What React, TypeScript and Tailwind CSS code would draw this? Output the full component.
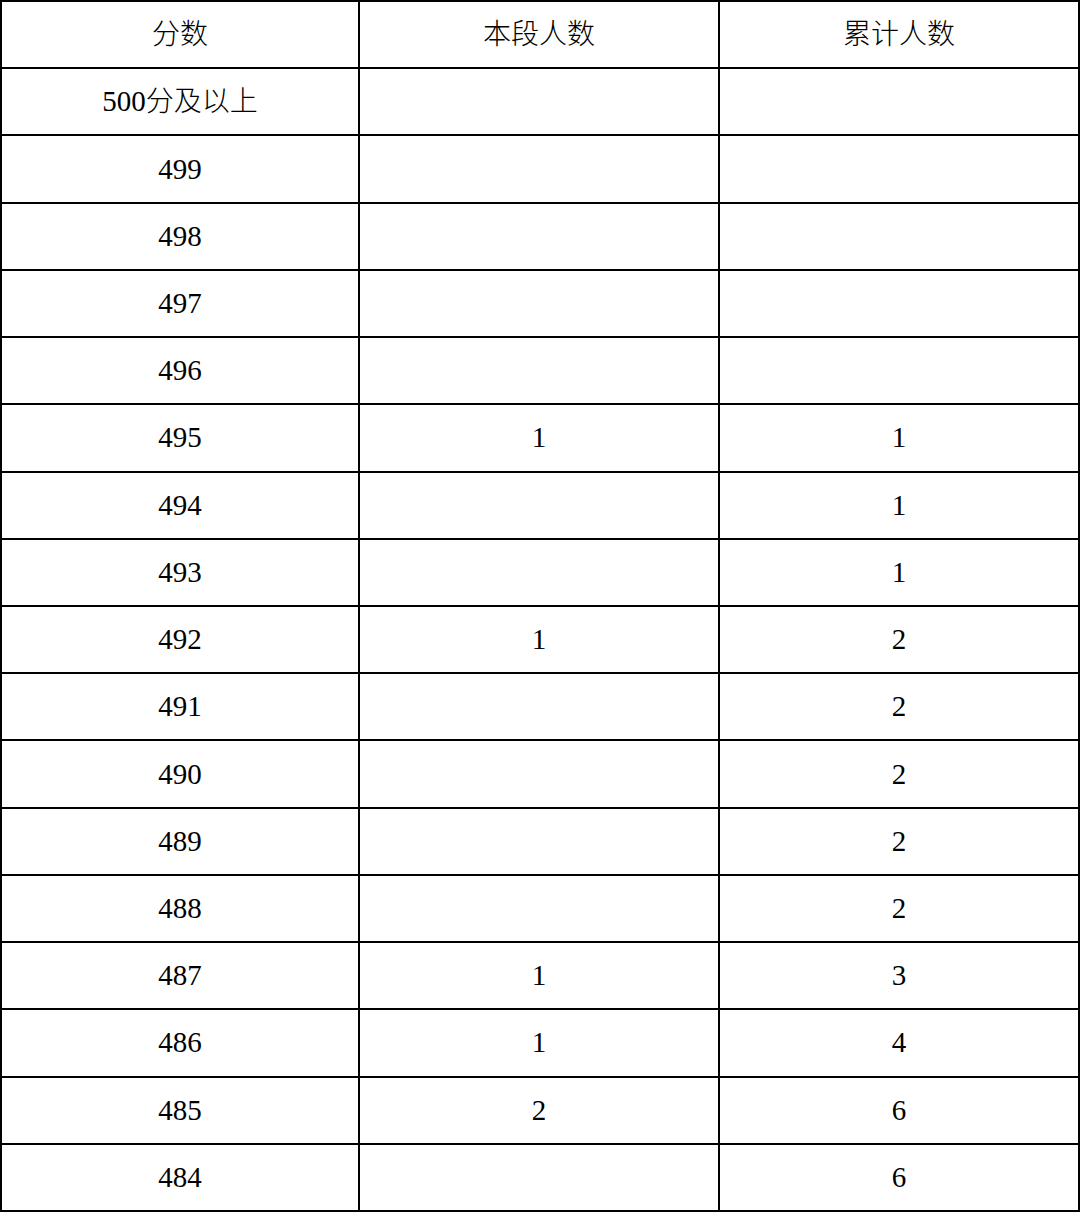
import React from "react";

const rows: [string, string, string][] = [
  ["分数", "本段人数", "累计人数"],
  ["500分及以上", "", ""],
  ["499", "", ""],
  ["498", "", ""],
  ["497", "", ""],
  ["496", "", ""],
  ["495", "1", "1"],
  ["494", "", "1"],
  ["493", "", "1"],
  ["492", "1", "2"],
  ["491", "", "2"],
  ["490", "", "2"],
  ["489", "", "2"],
  ["488", "", "2"],
  ["487", "1", "3"],
  ["486", "1", "4"],
  ["485", "2", "6"],
  ["484", "", "6"],
];

function Cell({ text }: { text: string }) {
  const parts = text.match(/[0-9]+|[^0-9]+/g) || [];
  return (
    <>
      {parts.map((p, k) =>
        /^[0-9]+$/.test(p) ? (
          <span key={k} className="text-[29px]">
            {p}
          </span>
        ) : (
          <span key={k} className="font-light text-[28px]">
            {p}
          </span>
        )
      )}
    </>
  );
}

export default function App() {
  return (
    <div className="w-[1080px] h-[1212px] bg-white">
      <div
        className="grid grid-cols-[358px_360px_1fr] grid-rows-[repeat(18,1fr)] h-[1212px] w-[1080px] border-l-2 border-t-2 border-black text-black"
        style={{ fontFamily: '"Liberation Serif", "Noto Sans CJK SC", serif' }}
      >
        {rows.map((r, i) =>
          r.map((c, j) => (
            <div
              key={`${i}-${j}`}
              className="flex items-center justify-center border-r-2 border-b-2 border-black leading-none"
            >
              <Cell text={c} />
            </div>
          ))
        )}
      </div>
    </div>
  );
}
